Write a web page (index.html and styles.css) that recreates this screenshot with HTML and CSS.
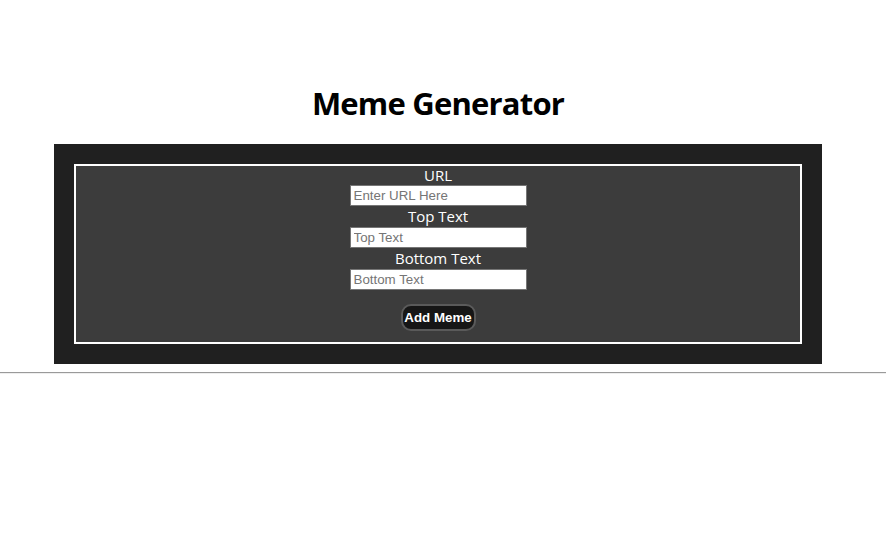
FILE: index.html
```html
<!DOCTYPE html>
<html lang="en">
<head>
<meta charset="utf-8">
<title>Meme Generator</title>
<link rel="stylesheet" href="styles.css">
</head>
<body>
<div class="page">
  <h1 class="title">Meme Generator</h1>
  <section class="panel">
    <form class="form">
      <label class="label" for="url">URL</label>
      <input class="field" id="url" type="text" placeholder="Enter URL Here">
      <label class="label" for="top">Top Text</label>
      <input class="field" id="top" type="text" placeholder="Top Text">
      <label class="label" for="bottom">Bottom Text</label>
      <input class="field" id="bottom" type="text" placeholder="Bottom Text">
      <button class="btn" type="button">Add Meme</button>
    </form>
  </section>
</div>
<hr class="rule">
</body>
</html>
```

FILE: styles.css
```css
html, body {
  margin: 0;
  padding: 0;
  background: #ffffff;
}

body {
  font-family: "Open Sans", "Noto Sans", sans-serif;
}

.page {
  width: 768px;
  margin-left: 54px;
  padding-top: 82px;
}

.title {
  margin: 0 0 19px;
  font-size: 31px;
  line-height: 43px;
  font-weight: 700;
  letter-spacing: -0.8px;
  text-align: center;
  color: #000;
}

.panel {
  background: #202020;
  padding: 20px;
}

.form {
  border: 2px solid #ffffff;
  background: #3c3c3c;
  display: flex;
  flex-direction: column;
  align-items: center;
  padding: 0 0 11px;
}

.label {
  color: #ffffff;
  font-size: 15px;
  line-height: 21px;
}

.label:first-child {
  margin-top: -1px;
  margin-bottom: -1px;
}

.field {
  box-sizing: border-box;
  width: 177px;
  height: 21px;
  margin: 0;
  padding: 1px 3px;
  border: 1px solid #767676;
  background: #fff;
  font-family: "Liberation Sans", Arial, sans-serif;
  font-size: 13.33px;
  color: #000;
}

.field::placeholder {
  color: #757575;
}

.btn {
  margin-top: 14px;
  box-sizing: border-box;
  width: 75px;
  height: 27px;
  padding: 0;
  background: #161616;
  color: #ffffff;
  border: 2px solid #5a5a5a;
  border-radius: 10px;
  font-family: "Liberation Sans", Arial, sans-serif;
  font-weight: 700;
  font-size: 13.33px;
}

.rule {
  margin: 8px 0 0;
  border: 0;
  border-top: 1px solid #9a9a9a;
  border-bottom: 1px solid #eeeeee;
  height: 0;
}
```
